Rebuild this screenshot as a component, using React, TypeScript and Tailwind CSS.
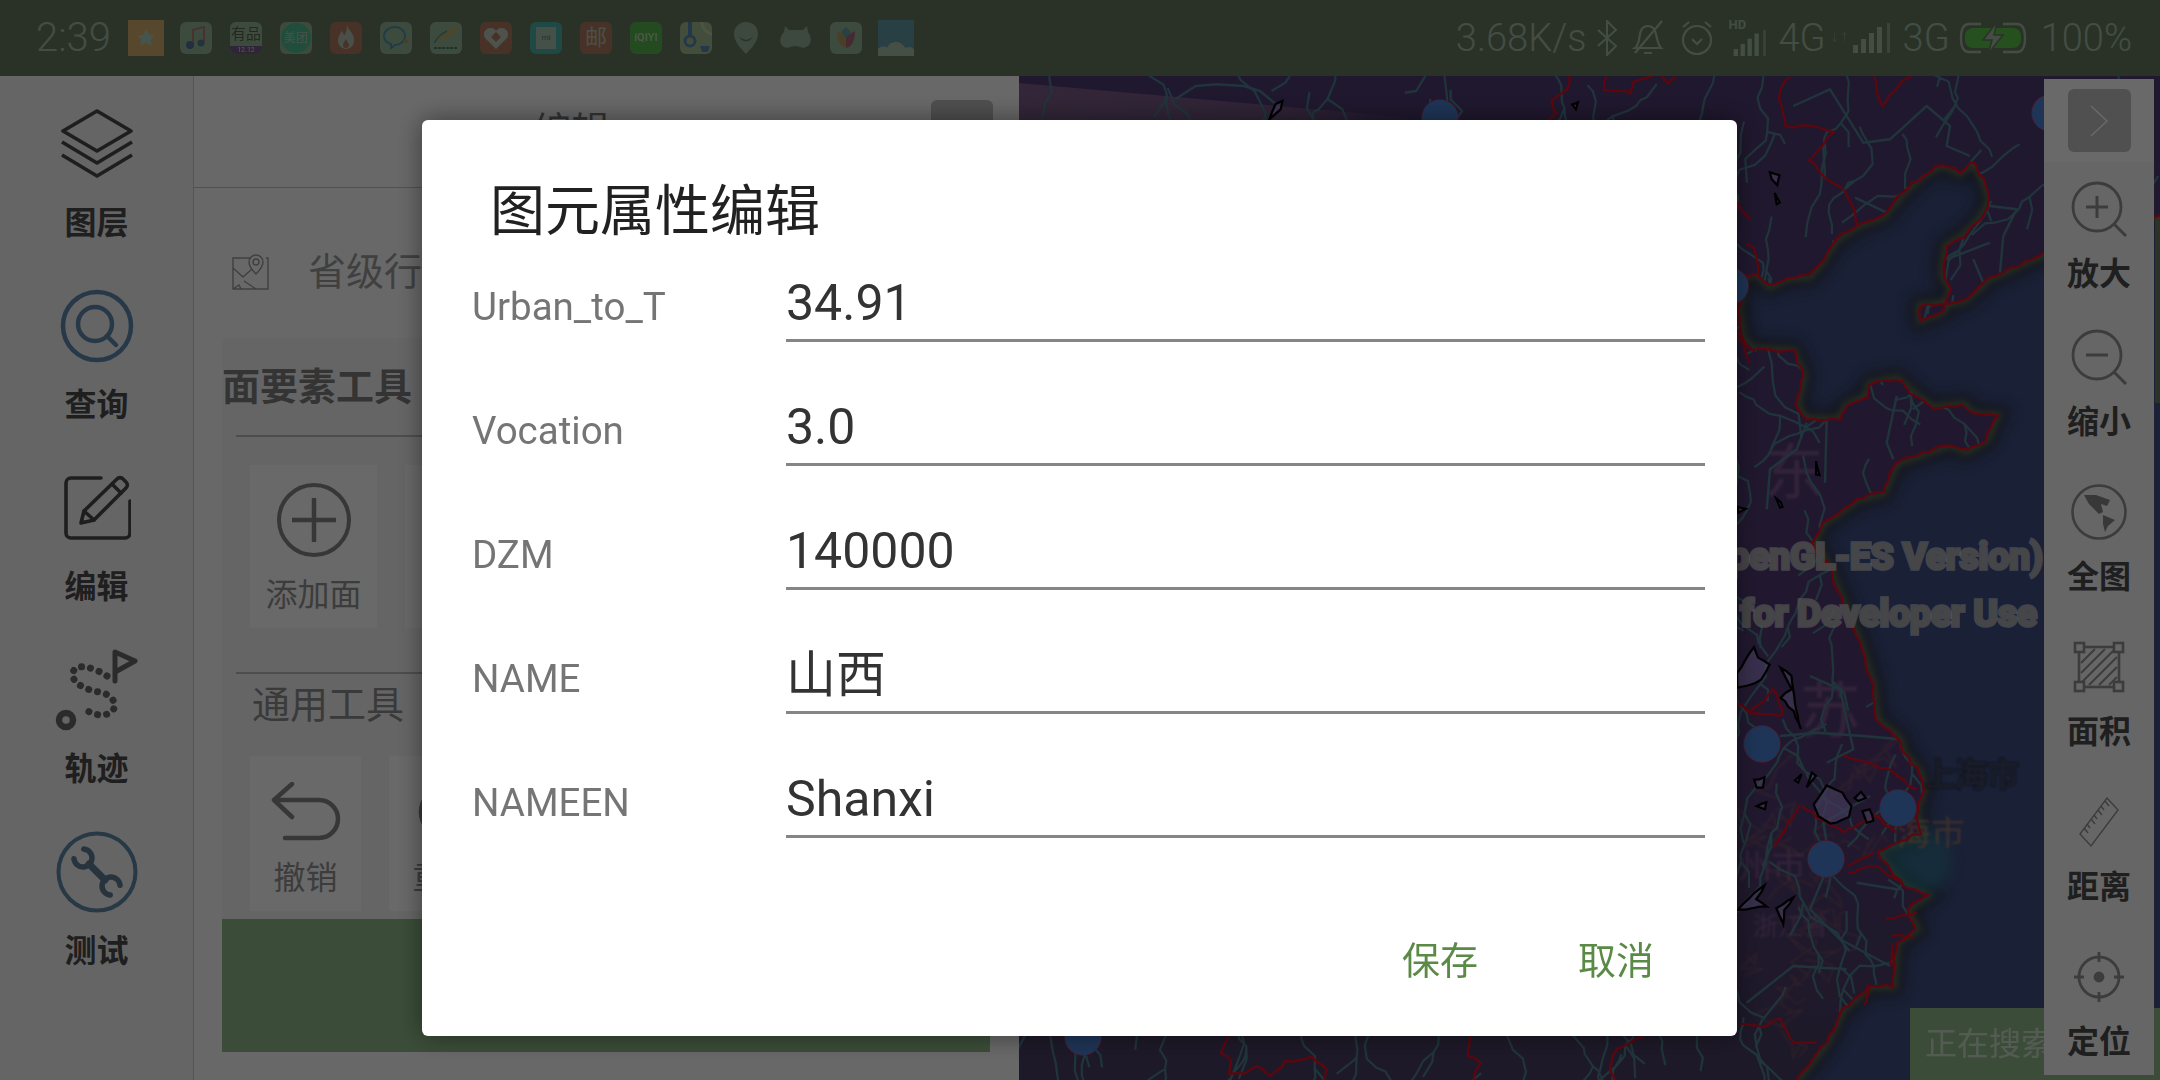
import type { ReactNode } from "react";

// ---- map drawing helpers ----
type P = [number, number];
const mulberry = (a: number) => () => {
  a |= 0;
  a = (a + 0x6d2b79f5) | 0;
  let t = Math.imul(a ^ (a >>> 15), 1 | a);
  t = (t + Math.imul(t ^ (t >>> 7), 61 | t)) ^ t;
  return ((t ^ (t >>> 14)) >>> 0) / 4294967296;
};
const z5 = (l: number[][]): P[] => l.map(([x, y]) => [1730 + x / 3, 76 + y / 3]);
const z6 = (l: number[][]): P[] => l.map(([x, y]) => [1730 + x / 3, 576 + y / 3]);
const zb = (l: number[][]): P[] => l.map(([x, y]) => [1019 + x / 2.178, 1030 + y / 3]);
const zt = (l: number[][]): P[] => l.map(([x, y]) => [1019 + x / 2.178, 76 + y / 3]);
const toD = (p: P[]) => "M" + p.map(([x, y]) => `${x.toFixed(1)} ${y.toFixed(1)}`).join("L");

const jagRng = mulberry(11);
const jag = (p: P[], amp = 2) => {
  const out: P[] = [];
  for (let i = 0; i < p.length - 1; i++) {
    const [ax, ay] = p[i];
    const [bx, by] = p[i + 1];
    const n = Math.max(1, Math.round(Math.hypot(bx - ax, by - ay) / 7));
    for (let k = 0; k < n; k++) {
      const t = k / n;
      out.push([ax + (bx - ax) * t + (jagRng() - 0.5) * amp * 2, ay + (by - ay) * t + (jagRng() - 0.5) * amp * 2]);
    }
  }
  out.push(p[p.length - 1]);
  return out;
};

const coast: P[] = [
  [2160, 215],
  ...z5([
    [942, 535], [880, 560], [820, 590], [780, 605], [730, 650], [700, 675], [660, 680], [570, 690], [572, 730], [640, 705],
    [665, 640], [640, 600], [640, 570], [650, 510], [700, 480], [750, 430], [780, 375], [760, 310], [730, 255], [690, 290],
    [640, 265], [580, 295], [520, 350], [460, 420], [380, 450], [320, 490], [280, 550], [240, 600], [170, 605], [120, 630],
    [80, 590], [40, 600], [25, 700], [40, 790], [70, 820], [190, 825], [220, 900], [200, 990], [230, 1030], [330, 1030],
    [350, 990], [410, 960], [420, 925], [500, 908], [560, 960], [610, 995], [700, 985], [730, 1015], [800, 1020], [770, 1090],
    [710, 1125], [660, 1105], [500, 1160], [460, 1250], [380, 1270], [340, 1300], [280, 1340], [250, 1400], [300, 1480],
  ]),
  ...z6([
    [340, 80], [390, 200], [430, 330], [440, 430], [510, 490], [520, 530], [570, 590], [580, 640], [560, 700], [570, 770],
    [480, 810], [440, 830], [520, 930], [590, 960], [530, 1000], [560, 1060], [500, 1100], [490, 1230], [420, 1230], [340, 1300],
    [290, 1400], [200, 1512],
  ]),
];
const landPoly = toD([...coast, [1019, 1080], [1019, 76], [2160, 76]]) + "Z";
const coastLine = toD(jag(coast, 1.8));

const borders = [
  zt([[1200, 0], [1195, 40], [1160, 70], [1170, 110], [1150, 134]]),
  zt([[1280, 0], [1275, 40], [1330, 50], [1340, 20], [1380, 0]]),
  zt([[1400, 0], [1415, 20], [1430, 0]]),
  z5([[180, 0], [145, 55], [170, 150], [240, 150], [310, 165], [240, 250], [290, 310], [350, 345], [385, 450]]),
  z5([[430, 0], [455, 90], [520, 10], [545, 0]]),
  z5([[20, 380], [60, 430]]),
  z5([[50, 505], [75, 520], [85, 590]]),
  z5([[25, 770], [60, 860]]),
  z6([[60, 410], [130, 340], [160, 420], [60, 410], [20, 380]]),
  z6([[340, 540], [470, 580], [560, 640]]),
  z6([[210, 690], [150, 780], [130, 810]]),
  z6([[210, 690], [340, 770], [430, 720], [500, 770]]),
  z6([[350, 870], [430, 830]]),
  z6([[350, 890], [440, 870], [520, 930]]),
  z6([[470, 1030], [560, 1010]]),
  z6([[480, 1080], [550, 1085]]),
  z6([[490, 1100], [480, 1160], [500, 1170]]),
  z6([[400, 1290], [420, 1230]]),
  z6([[30, 1340], [100, 1350], [150, 1330], [190, 1400], [260, 1400]]),
  zb([[455, 18], [440, 70], [460, 90], [460, 130], [490, 130], [520, 105], [550, 140], [580, 95], [610, 90], [635, 80], [670, 120], [665, 150]]),
  zb([[985, 18], [975, 75], [1005, 95], [990, 150]]),
  zb([[1360, 18], [1300, 60], [1285, 110], [1300, 150]]),
].map((b) => toD(jag(b, 1.4)));

const handRivers = [
  zt([[340, 70], [385, 30], [430, 25], [490, 30], [525, 45], [560, 85]]),
  zt([[550, 45], [580, 20], [590, 0]]),
  zt([[840, 50], [865, 45], [885, 0]]),
  zt([[940, 42], [940, 70], [965, 105], [950, 134]]),
  z5([[190, 90], [300, 40], [400, 200], [480, 190], [590, 90], [660, 150], [650, 210], [720, 240]]),
  z5([[780, 390], [860, 400], [820, 480], [810, 590]]),
  z5([[650, 550], [780, 500]]),
  z5([[730, 550], [760, 620]]),
  z5([[280, 210], [285, 310]]),
  z5([[375, 365], [470, 410]]),
  z5([[500, 960], [470, 1100], [490, 1150]]),
  z5([[230, 1040], [200, 1120], [120, 1180], [110, 1300]]),
  z5([[290, 1030], [285, 1220]]),
  z6([[240, 300], [330, 340], [370, 520], [290, 560]]),
  z6([[150, 480], [260, 470], [400, 480], [510, 490]]),
  z6([[290, 800], [280, 740], [420, 660]]),
  z6([[290, 880], [240, 1000], [330, 1090], [480, 1170]]),
  z6([[380, 920], [500, 940]]),
  z6([[50, 1280], [190, 1170], [350, 1180]]),
].map(toD);

const riverRng = mulberry(42);
const genRivers: string[] = [];
for (let gx = 1019; gx < 2160; gx += 62) {
  for (let gy = 40; gy < 1090; gy += 78) {
    let x = gx + riverRng() * 50;
    let y = gy + riverRng() * 60;
    let ang = Math.PI / 2 + (riverRng() - 0.5) * 1.2;
    const base = ang;
    const pts: P[] = [[x, y]];
    const steps = 9 + Math.floor(riverRng() * 8);
    for (let i = 0; i < steps; i++) {
      ang = ang * 0.6 + base * 0.4 + (riverRng() - 0.5) * 1.4;
      const len = 6 + riverRng() * 12;
      x += Math.cos(ang) * len;
      y += Math.sin(ang) * len;
      pts.push([x, y]);
      if (i === 4) {
        // side branch
        const bx = x + (riverRng() - 0.5) * 44;
        const by = y + 10 + riverRng() * 24;
        genRivers.push(toD([[x, y], [(x + bx) / 2 + 4, (y + by) / 2 - 3], [bx, by]]));
      }
    }
    genRivers.push(toD(pts));
  }
}
const roadRng = mulberry(5);
const roads: string[] = [];
for (let i = 0; i < 34; i++) {
  let x = 1740 + roadRng() * 190;
  let y = 770 + roadRng() * 300;
  const pts: P[] = [[x, y]];
  for (let k = 0; k < 5; k++) {
    x += (roadRng() - 0.5) * 50;
    y += (roadRng() - 0.5) * 40;
    pts.push([x, y]);
  }
  roads.push(toD(pts));
}

const islands = [
  z5([[120, 290], [150, 300], [140, 330], [125, 310]]),
  z5([[135, 350], [148, 380], [140, 385]]),
  z5([[258, 1155], [268, 1195], [258, 1195]]),
  z5([[140, 1265], [160, 1290], [150, 1295]]),
  z5([[25, 1295], [45, 1300], [25, 1310]]),
  z6([[22, 290], [70, 215], [85, 245], [120, 265], [95, 310], [50, 330], [22, 335]]),
  z6([[150, 275], [185, 300], [200, 400], [212, 462], [190, 405], [150, 365], [185, 340]]),
  z6([[70, 610], [105, 605], [100, 635], [80, 635]]),
  z6([[80, 690], [110, 680], [105, 700]]),
  z6([[195, 615], [215, 595], [205, 620]]),
  z6([[228, 635], [245, 590], [258, 600]]),
  z6([[250, 685], [290, 630], [335, 650], [365, 690], [355, 725], [300, 745], [265, 720]]),
  z6([[375, 665], [395, 650], [405, 665], [385, 675]]),
  z6([[395, 705], [420, 700], [430, 735], [410, 740]]),
  z6([[22, 1000], [70, 950], [105, 930], [80, 970], [110, 990], [50, 1000]]),
  z6([[140, 995], [190, 965], [165, 1000], [160, 1045]]),
  zt([[545, 130], [560, 85], [572, 75], [570, 100]]),
  zt([[1205, 85], [1216, 78], [1213, 100]]),
];

const MapArt = () => (
  <svg viewBox="1019 76 1141 1004" className="absolute inset-0 h-full w-full">
    <defs>
      <linearGradient id="land" gradientUnits="userSpaceOnUse" x1="0" y1="76" x2="0" y2="1080">
        <stop offset="0" stopColor="#4e3a70" />
        <stop offset="0.72" stopColor="#523c74" />
        <stop offset="1" stopColor="#483e62" />
      </linearGradient>
      <linearGradient id="wedge" gradientUnits="userSpaceOnUse" x1="1019" y1="0" x2="1423" y2="0">
        <stop offset="0" stopColor="#7a5c88" />
        <stop offset="0.6" stopColor="#755884" />
        <stop offset="1" stopColor="#4e3a70" />
      </linearGradient>
      <filter id="b12" x="-20%" y="-20%" width="140%" height="140%"><feGaussianBlur stdDeviation="7" /></filter>
      <filter id="b3" x="-20%" y="-20%" width="140%" height="140%"><feGaussianBlur stdDeviation="3" /></filter>
      <filter id="b1"><feGaussianBlur stdDeviation="1.2" /></filter>
      <clipPath id="landClip"><path d={landPoly} /></clipPath>
    </defs>
    {/* sea and the coastal shadow sit under the land */}
    <rect x="1019" y="76" width="1141" height="1004" fill="#3f4e82" />
    <path d={toD(coast)} fill="none" stroke="#22282c" strokeWidth="20" opacity="0.7" filter="url(#b12)" />
    <path d={toD(coast)} fill="none" stroke="#5d6a54" strokeWidth="9" filter="url(#b3)" />
    <ellipse cx="1915" cy="860" rx="36" ry="36" fill="#2b8c99" opacity="0.5" filter="url(#b12)" />
    <rect x="2155" y="203" width="5" height="200" fill="#6e7a62" />
    <path d={landPoly} fill="url(#land)" />
    <path d="M1019 83L1423 119L1423 130L1019 130Z" fill="url(#wedge)" />
    <g clipPath="url(#landClip)">
      <path d={roads.join("")} fill="none" stroke="#a8675f" strokeWidth="1.6" opacity="0.4" filter="url(#b1)" />
      <g fill="#a970a8" opacity="0.5" filter="url(#b1)" fontFamily="'Noto Sans CJK SC',sans-serif">
        <text x="1764" y="494" fontSize="60">东</text>
        <text x="1800" y="732" fontSize="60">苏</text>
        <text x="1738" y="878" fontSize="34">州市</text>
        <text x="1753" y="935" fontSize="25">浙江省</text>
      </g>
      <path d={genRivers.join("")} fill="none" stroke="#4d8090" strokeWidth="2.2" strokeLinejoin="round" />
      <path d={handRivers.join("")} fill="none" stroke="#4d8090" strokeWidth="2.4" strokeLinejoin="round" />
    </g>
    <g fill="#d88d5a" filter="url(#b1)" fontFamily="'Noto Sans CJK SC',sans-serif" opacity="0.55">
      <text x="1897" y="845" fontSize="34">海市</text>
    </g>
    <text x="1923" y="786" fontSize="32" fill="#4a4a4a" stroke="#111" strokeWidth="3" paintOrder="stroke" filter="url(#b1)" fontFamily="'Noto Sans CJK SC',sans-serif" opacity="0.45">上海市</text>
    <path d={coastLine} fill="none" stroke="#e01020" strokeWidth="2.3" strokeLinejoin="round" />
    <path d={borders.join("")} fill="none" stroke="#e01020" strokeWidth="2.3" strokeLinejoin="round" />
    {islands.map((p, i) => (
      <path key={i} d={toD(jag(p, 0.8)) + "Z"} fill="#a08ad8" fillOpacity="0.7" stroke="#000" strokeWidth="2.2" />
    ))}
    {[[1440, 118], [1762, 744], [1898, 808], [1826, 859], [2050, 113], [1730, 286], [1083, 1037]].map(([cx, cy]) => (
      <circle key={cx} cx={cx} cy={cy} r="18.5" fill="#4a80d4" stroke="#ff1a28" strokeOpacity="0.5" strokeWidth="1" />
    ))}
    <g fontFamily="Roboto,sans-serif" fontWeight="700" fontSize="37" fill="#aaaaaa" stroke="#e8e8e8" strokeWidth="3.5" paintOrder="stroke" strokeOpacity="0.6" textAnchor="end">
      <text x="2043" y="569">(OpenGL-ES Version)</text>
      <text x="2037" y="626">for Developer Use</text>
    </g>
  </svg>
);

// ---- status bar ----
const tileBase = "flex h-8 w-8 shrink-0 items-center justify-center overflow-hidden rounded-[6px]";

const StatusIcons = () => (
  <div className="flex items-center gap-[18px] opacity-70">
    <div className="mr-[-2px] flex h-9 w-9 shrink-0 items-center justify-center bg-[#ffc375]">
      <svg width="20" height="20" viewBox="0 0 24 24" fill="#c9f0ea"><path d="M12 1l3.4 7.2 7.6 1-5.6 5.3 1.5 7.8L12 17.5 5.1 21.3l1.5-7.8L1 9.2l7.6-1z" /></svg>
    </div>
    <div className={`${tileBase} bg-[#aacdb0]`}>
      <svg width="24" height="26" viewBox="0 0 24 26" fill="none"><path d="M9 20V5l11-3v15" stroke="#d0707a" strokeWidth="1.8" /><circle cx="6" cy="20" r="4" fill="#4d6fb0" /><circle cx="17" cy="18" r="3.6" fill="#4d7fb0" /></svg>
    </div>
    <div className={`${tileBase} flex-col bg-[#aacdb0] text-[#5a5a3c]`}>
      <span className="text-[15px] leading-[24px]">有品</span>
      <span className="w-full bg-[#7b4a9a] text-center text-[7px] leading-[8px] text-white">12.12</span>
    </div>
    <div className={`${tileBase} bg-[#aacdb0]`}>
      <span className="flex h-[30px] w-[30px] items-center justify-center rounded-full bg-[#4ad9a8] text-[12px] text-[#cdebd5]">美团</span>
    </div>
    <div className={`${tileBase} bg-[#cf7a61]`}>
      <svg width="20" height="26" viewBox="0 0 20 26" fill="#d6e0d8"><path d="M11 0c1 5 7 8 7 15a8 8 0 0 1-8 9 8 8 0 0 1-8-9c0-4 3-5 3-9 2 1 3 3 3 5 2-3 3-7 3-11zM10 14c-2 3-3 4-3 6s1 3 3 3 3-1 3-3-2-3-3-6z" /></svg>
    </div>
    <div className={`${tileBase} bg-[#aacdb0]`}>
      <svg width="28" height="26" viewBox="0 0 28 26" fill="none"><path d="M13 2c6 0 10 4 10 9s-4 9-10 9l-4 3v-4C5 18 2 15 2 11c0-5 5-9 11-9z" stroke="#3f9fc4" strokeWidth="2" /><path d="M24 13l3 3-3 3-3-3z" fill="#d9a35a" /></svg>
    </div>
    <div className={`${tileBase} bg-[#aacdb0]`}>
      <svg width="30" height="28" viewBox="0 0 30 28" fill="none"><path d="M5 18C10 8 18 3 28 2 25 10 16 16 5 18z" fill="#d6c37a" /><path d="M3 19C8 12 10 10 16 7" stroke="#4a9ab0" strokeWidth="1.5" /><path d="M3 24h24" stroke="#3f7a6a" strokeWidth="2" strokeDasharray="3 1" /></svg>
    </div>
    <div className={`${tileBase} bg-[#cf7a61]`}>
      <svg width="26" height="24" viewBox="0 0 26 24" fill="#dfe9de"><path d="M13 23L2 12C-1 7 3 1 8 2c2 0 4 1 5 3 1-2 3-3 5-3 5-1 9 5 6 10z" /><path d="M13 6l-5 5 5 5 5-5z" fill="#cf7a61" /></svg>
    </div>
    <div className={`${tileBase} bg-[#3fc9c9]`}>
      <span className="flex h-[22px] w-[20px] items-center justify-center bg-[#c4e2d2] text-[8px] text-[#2c8a8a]">mi</span>
    </div>
    <div className={`${tileBase} bg-[#cf7a61] text-[22px] leading-none text-[#d9dfd0]`}>邮</div>
    <div className={`${tileBase} bg-[#4fd044] text-[11px] font-bold text-[#d4f5cc]`}>iQIYI</div>
    <div className={`${tileBase} relative bg-[#b9d7a4]`}>
      <svg width="32" height="32" viewBox="0 0 32 32" fill="none"><path d="M22 0a12 12 0 0 0 10 12" stroke="#dff0c6" strokeWidth="3" /><path d="M10 0v14" stroke="#4f93d8" strokeWidth="4" /><circle cx="10" cy="19" r="5" stroke="#4f93d8" strokeWidth="3" /><path d="M20 24h10l-2 6h-6z" fill="#4f93d8" /></svg>
    </div>
    <div className="flex h-8 w-8 shrink-0 items-center justify-center">
      <svg width="24" height="32" viewBox="0 0 24 32" fill="#aac4b0"><path d="M12 0c7 0 12 5 12 12 0 7-6 14-12 20C6 26 0 19 0 12 0 5 5 0 12 0z" /><path d="M5 14c4 5 10 5 14 0-2 7-12 7-14 0z" fill="#667a62" /></svg>
    </div>
    <div className="flex h-8 w-8 shrink-0 items-center justify-center">
      <svg width="32" height="24" viewBox="0 0 32 24" fill="#aac4b0"><path d="M5 0l4 4h14l4-4 1 6c4 5 4 13-2 15-3 2-8-1-10-1-4 0-9 3-12 1C-2 18 0 10 4 6z" /></svg>
    </div>
    <div className={`${tileBase} bg-[#aacdb0]`}>
      <svg width="24" height="24" viewBox="0 0 24 24"><path d="M3 5l9 5v12C6 21 3 14 3 5z" fill="#d9a55f" /><path d="M21 5l-9 5v12c6-1 9-8 9-17z" fill="#c75e86" /><path d="M12 1l5 5-5 6-5-6z" fill="#5fb2c4" /></svg>
    </div>
    <div className="ml-[-2px] flex h-9 w-9 shrink-0 items-end bg-[#62aac3]">
      <svg width="36" height="18" viewBox="0 0 36 18" fill="#c4e0c8"><path d="M0 18v-7c3-3 7-3 9-1 2-7 14-9 18 0 4-2 8-1 9 2v6z" /></svg>
    </div>
  </div>
);

const Signal = () => (
  <svg width="40" height="30" viewBox="0 0 40 30" fill="#a3bca3">
    <rect x="0" y="22" width="5" height="8" /><rect x="8" y="16" width="5" height="14" /><rect x="16" y="10" width="5" height="20" /><rect x="24" y="4" width="5" height="26" /><rect x="34" y="0" width="3" height="30" opacity="0.6" />
  </svg>
);

const StatusRight = () => (
  <div className="ml-auto flex items-center text-[38px] font-light text-[#a3bca3]">
    <span>3.68K/s</span>
    <svg className="ml-[9px]" width="22" height="36" viewBox="0 0 22 36" fill="none" stroke="#a3bca3" strokeWidth="2"><path d="M2 10l18 16-9 9V1l9 9L2 26" /></svg>
    <svg className="ml-[14px]" width="32" height="36" viewBox="0 0 32 36" fill="none" stroke="#a3bca3" strokeWidth="2.2"><path d="M3 28c4-3 4-8 5-14 1-6 4-8 8-8s7 3 8 8 2 11 5 14zM12 33h8M30 1L3 33" /></svg>
    <svg className="ml-[17px]" width="32" height="36" viewBox="0 0 32 36" fill="none" stroke="#a3bca3" strokeWidth="2.2"><circle cx="16" cy="20" r="14" /><path d="M11 19l5 5 5-5M2 7l6-5M30 7l-6-5" /></svg>
    <div className="relative ml-[16px] h-[36px] w-[42px]">
      <span className="absolute left-0 top-[-2px] text-[13px] font-bold leading-[14px]">HD</span>
      <svg className="absolute bottom-0 right-0" width="40" height="26" viewBox="0 0 40 30" fill="#a3bca3">
        <rect x="0" y="22" width="5" height="8" /><rect x="8" y="16" width="5" height="14" /><rect x="16" y="10" width="5" height="20" /><rect x="24" y="4" width="5" height="26" /><rect x="34" y="0" width="3" height="30" opacity="0.6" />
      </svg>
    </div>
    <span className="ml-[8px]">4G</span>
    <span className="ml-[4px] w-[12px] text-[10px] leading-none opacity-60">↓↑</span>
    <div className="ml-[11px]"><Signal /></div>
    <span className="ml-[10px]">3G</span>
    <svg className="ml-[9px]" width="68" height="32" viewBox="0 0 68 32" fill="none">
      <path d="M22 2H10C5 2 2 6 2 16s3 14 8 14h12M44 2h14c5 0 8 4 8 14s-3 14-8 14H44" stroke="#a3bca3" strokeWidth="2.4" />
      <rect x="6" y="6" width="56" height="20" rx="8" fill="#5cc247" />
      <path d="M38 0L24 18h9l-4 14 15-19h-9z" fill="#a3bca3" stroke="#667a62" strokeWidth="1.5" />
    </svg>
    <span className="ml-[14px]">100%</span>
  </div>
);

// ---- left nav ----
const NAV = "#4a4a4a";
const navItems: { label: string; icon: ReactNode }[] = [
  {
    label: "图层",
    icon: (
      <svg width="74" height="70" viewBox="0 0 74 70" fill="none" stroke={NAV} strokeWidth="3.6" strokeLinejoin="round">
        <path d="M37 2l34 20-34 20L3 22z" />
        <path d="M2 33l35 21 35-21M2 46l35 21 35-21" />
      </svg>
    ),
  },
  {
    label: "查询",
    icon: (
      <svg width="74" height="74" viewBox="0 0 74 74" fill="none" stroke="#5f8aae" strokeWidth="4.5">
        <circle cx="37" cy="37" r="34" />
        <circle cx="35" cy="35" r="17" />
        <path d="M47 47l9 9" strokeLinecap="round" />
      </svg>
    ),
  },
  {
    label: "编辑",
    icon: (
      <svg width="68" height="66" viewBox="0 0 68 66" fill="none" stroke={NAV} strokeWidth="3.6" strokeLinejoin="round" strokeLinecap="round">
        <path d="M38 3H8a5 5 0 0 0-5 5v50a5 5 0 0 0 5 5h54a5 5 0 0 0 5-5V26" />
        <path d="M18 48l3-12L54 4a4 4 0 0 1 6 0l3 3a4 4 0 0 1 0 6L31 45z" />
        <path d="M49 9l9 9M21 36l10 9" />
      </svg>
    ),
  },
  {
    label: "轨迹",
    icon: (
      <svg width="84" height="84" viewBox="0 0 84 84" fill="none" stroke="#6a6a6a">
        <path d="M60 33V4l20 9-18 10" strokeWidth="5" strokeLinejoin="round" strokeLinecap="round" />
        <path d="M52 28C40 20 22 14 18 24c-3 10 12 18 26 20 14 2 20 14 12 20-8 6-20 2-28-4" strokeWidth="7" strokeLinecap="round" strokeDasharray="0.1 9" />
        <circle cx="11" cy="72" r="7" strokeWidth="6.5" />
      </svg>
    ),
  },
  {
    label: "测试",
    icon: (
      <svg width="82" height="82" viewBox="0 0 82 82" fill="none">
        <circle cx="41" cy="41" r="38.5" stroke="#5f8aa6" strokeWidth="4" />
        <g stroke="#5f7f94" strokeWidth="5.5" strokeLinecap="round">
          <path d="M27.8 18A9 9 0 1 1 18 27.8" />
          <path d="M54.2 64A9 9 0 1 1 64 54.2" />
          <path d="M33 33l16 16" strokeWidth="7" />
        </g>
      </svg>
    ),
  },
];

// ---- right toolbar ----
const TB = "#929292";
const Magnifier = ({ plus }: { plus?: boolean }) => (
  <svg width="56" height="56" viewBox="0 0 56 56" fill="none" stroke={TB} strokeWidth="2.8">
    <circle cx="26" cy="26" r="24" />
    <path d="M43 43l12 12M15 26h22" strokeWidth="3" />
    {plus && <path d="M26 15v22" strokeWidth="3" />}
  </svg>
);
const toolItems: { label: string; h: string; icon: ReactNode }[] = [
  { label: "放大", h: "h-[130px]", icon: <Magnifier plus /> },
  { label: "缩小", h: "h-[148px]", icon: <Magnifier /> },
  {
    label: "全图",
    h: "h-[155px]",
    icon: (
      <svg width="56" height="56" viewBox="0 0 56 56" fill="none">
        <circle cx="28" cy="28" r="26.5" stroke={TB} strokeWidth="2.6" />
        <path d="M13 11l12 0 14 5-3 6-6-2 2 8-4 2-6-6-4-4zM32 31l12 5-7 6-3 6-2-8z" fill="#888" />
      </svg>
    ),
  },
  {
    label: "面积",
    h: "h-[155px]",
    icon: (
      <svg width="52" height="52" viewBox="0 0 52 52" fill="none" stroke={TB} strokeWidth="2.6">
        <rect x="6" y="6" width="40" height="40" />
        <path d="M8 22L22 8M8 32L32 8M8 42L42 8M16 44L44 16M26 44L44 26M36 44l8-8" strokeWidth="2" />
        <g fill="#f8f8f8"><rect x="2" y="2" width="9" height="9" /><rect x="41" y="2" width="9" height="9" /><rect x="2" y="41" width="9" height="9" /><rect x="41" y="41" width="9" height="9" /></g>
      </svg>
    ),
  },
  {
    label: "距离",
    h: "h-[155px]",
    icon: (
      <svg width="40" height="52" viewBox="0 0 40 52" fill="none" stroke={TB} strokeWidth="1.4">
        <path d="M28 2l11 12L12 50 1 38z" />
        <path d="M26 5l4 5M22 10l3 4M19 14l4 5M15 19l3 4M12 23l4 5M8 28l3 4M5 32l4 5" />
      </svg>
    ),
  },
  {
    label: "定位",
    h: "h-[155px]",
    icon: (
      <svg width="52" height="52" viewBox="0 0 52 52" fill="none" stroke={TB} strokeWidth="2.8">
        <circle cx="26" cy="26" r="20" />
        <circle cx="26" cy="26" r="4" fill={TB} />
        <path d="M26 1v10M26 41v10M1 26h10M41 26h10" />
      </svg>
    ),
  },
];

const fields = [
  ["Urban_to_T", "34.91"],
  ["Vocation", "3.0"],
  ["DZM", "140000"],
  ["NAME", "山西"],
  ["NAMEEN", "Shanxi"],
];

export default function App() {
  return (
    <div className="relative flex h-[1080px] w-[2160px] flex-col overflow-hidden bg-white font-[Roboto,'Noto_Sans_CJK_SC',sans-serif]">
      {/* status bar */}
      <div className="flex h-[76px] shrink-0 items-center bg-[#667a62] pl-[36px] pr-[28px]">
        <span className="mr-[17px] text-[40px] font-light text-[#a3bca3]">2:39</span>
        <StatusIcons />
        <StatusRight />
      </div>

      <div className="flex min-h-0 flex-1">
        {/* left nav */}
        <div className="flex w-[194px] shrink-0 flex-col border-r border-[#cfcfcf] bg-[#f4f4f4] pt-[28px]">
          {navItems.map((n) => (
            <div key={n.label} className="flex h-[182px] flex-col items-center">
              <div className="flex h-[80px] items-center justify-center">{n.icon}</div>
              <span className="mt-[19px] text-[32px] font-bold leading-[40px] text-[#4c4c4c]">{n.label}</span>
            </div>
          ))}
        </div>

        {/* edit panel */}
        <div className="flex w-[825px] shrink-0 flex-col overflow-hidden bg-[#fdfdfd]">
          <div className="relative flex h-[112px] shrink-0 items-center justify-center border-b border-[#c4c4c4]">
            <span className="pr-[70px] text-[38px] text-[#7a7a7a]">编辑</span>
            <div className="absolute left-[737px] top-[24px] h-[62px] w-[62px] rounded-[6px] bg-[#c0c0c0]" />
          </div>
          <div className="mt-[52px] flex h-[64px] shrink-0 items-center pl-[38px]">
            <svg width="37" height="36" viewBox="0 0 37 36" fill="none" stroke="#9a9a9a" strokeWidth="1.4">
              <path d="M19 4H1v31h35V4h-2M1 14l10 9 9-8M9 35l-2-4-6 4M12 27l12 8" />
              <path d="M24 20c-5-5-7-8-7-12a7 7 0 0 1 14 0c0 4-2 7-7 12z" />
              <circle cx="24" cy="8" r="3" />
            </svg>
            <span className="ml-[39px] whitespace-nowrap text-[38px] text-[#9c9c9c]">省级行政区</span>
          </div>
          <div className="ml-[28px] mt-[34px] flex w-[768px] flex-col bg-[#f6f6f6]">
            <div className="h-[97px]">
              <div className="pt-[20px] text-[38px] font-bold leading-[58px] text-[#7e7e7e]">面要素工具</div>
            </div>
            <div className="ml-[14px] h-[2px] bg-[#bcbcbc]" />
            <div className="flex gap-[28px] pl-[28px] pt-[28px]">
              <div className="flex h-[163px] w-[127px] flex-col items-center bg-[#fefefe]">
                <svg className="mt-[18px]" width="74" height="74" viewBox="0 0 74 74" fill="none" stroke="#858585" strokeWidth="4">
                  <circle cx="37" cy="37" r="35" />
                  <path d="M37 15v44M15 37h44" strokeWidth="4.5" />
                </svg>
                <span className="mt-[18px] text-[32px] leading-[40px] text-[#929292]">添加面</span>
              </div>
              <div className="flex h-[163px] w-[127px] flex-col items-center bg-[#fefefe]" />
            </div>
            <div className="ml-[14px] mt-[44px] h-[2px] bg-[#bcbcbc]" />
            <div className="pl-[30px] pt-[6px] text-[38px] leading-[50px] text-[#8e8e8e]">通用工具</div>
            <div className="flex gap-[28px] pl-[28px] pt-[26px]">
              <div className="flex h-[155px] w-[111px] flex-col items-center bg-[#fefefe]">
                <svg className="mt-[26px]" width="70" height="60" viewBox="0 0 70 60" fill="none" stroke="#858585" strokeWidth="4.5" strokeLinecap="round" strokeLinejoin="round">
                  <path d="M21 2L3 18l18 17" />
                  <path d="M4 18h44a18 18 0 0 1 0 38H14" />
                </svg>
                <span className="mt-[16px] text-[32px] leading-[40px] text-[#929292]">撤销</span>
              </div>
              <div className="flex h-[155px] w-[111px] flex-col items-center bg-[#fefefe]">
                <svg className="mt-[26px]" width="70" height="60" viewBox="0 0 70 60" fill="none" stroke="#858585" strokeWidth="4.5"><circle cx="35" cy="30" r="24" /></svg>
                <span className="mt-[16px] text-[32px] leading-[40px] text-[#929292]">重做</span>
              </div>
            </div>
            <div className="mt-[8px] h-[133px] bg-[#8fbc89]" />
          </div>
        </div>

        {/* map */}
        <div className="relative min-w-0 flex-1 overflow-hidden">
          <MapArt />
          <div className="absolute bottom-0 right-0 flex h-[72px] w-[250px] items-center bg-[#8fbc89] pl-[15px] text-[32px] text-[#f4f4f4]">
            <span className="whitespace-nowrap opacity-60">正在搜索</span>
          </div>
          <div className="absolute bottom-[5px] right-[6px] top-[3px] flex w-[110px] flex-col items-center bg-[#f7f7f7]">
            <div className="flex h-[83px] w-full shrink-0 items-start justify-center bg-white pt-[10px]">
              <div className="flex h-[63px] w-[63px] items-center justify-center rounded-[6px] bg-[#c2c2c2]">
                <svg width="20" height="34" viewBox="0 0 20 34" fill="none" stroke="#fff" strokeWidth="1.4"><path d="M2 2l16 15L2 32" /></svg>
              </div>
            </div>
            {toolItems.map((t) => (
              <div key={t.label} className={`flex w-full shrink-0 flex-col items-center justify-end ${t.h}`}>
                <div className="flex h-[60px] items-center justify-center">{t.icon}</div>
                <span className="mb-[-2px] mt-[15px] text-[32px] font-bold leading-[40px] text-[#4c4c4c]">{t.label}</span>
              </div>
            ))}
          </div>
        </div>
      </div>

      {/* dim layer */}
      <div className="absolute inset-0 bg-[rgba(0,0,0,0.59)]" />

      {/* dialog */}
      <div className="absolute left-[422px] top-[120px] flex h-[916px] w-[1315px] flex-col rounded-[6px] bg-white pl-[50px] pr-[32px] shadow-[0_0_26px_rgba(0,0,0,0.45)]">
        <div className="pl-[18px] pt-[64px] text-[55px] leading-[54px] text-[#212121]">图元属性编辑</div>
        <div className="mt-[40px] flex flex-col gap-[60px]">
          {fields.map(([label, value]) => (
            <div key={label} className="flex h-[64px] items-baseline">
              <span className="w-[314px] shrink-0 text-[38.5px] text-[#757575]">{label}</span>
              <span className="h-[64px] flex-1 border-b-[3px] border-[#858585] text-[50px] leading-[50px] text-[#333333]">{value}</span>
            </div>
          ))}
        </div>
        <div className="mr-[51px] mt-[101px] flex justify-end gap-[100px] text-[38px] leading-[44px] text-[#5b8a47]">
          <span>保存</span>
          <span>取消</span>
        </div>
      </div>
    </div>
  );
}
